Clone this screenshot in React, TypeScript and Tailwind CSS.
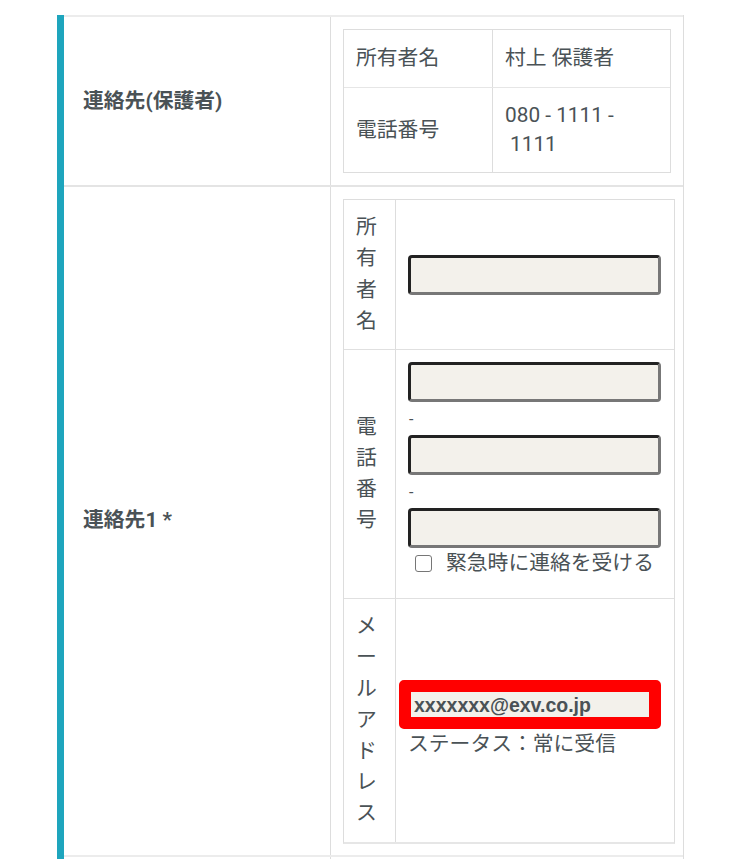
import React from "react";

const txt = "text-[#4a5256]";

function Field() {
  return (
    <input
      readOnly
      className="block h-[40px] w-full rounded-[4px] border-[3px] border-t-[#222] border-l-[#222] border-b-[#777] border-r-[#777] bg-[#f3f1eb] outline-none"
    />
  );
}

function Stack({ chars }: { chars: string }) {
  return (
    <div className="flex flex-col">
      {chars.split("").map((c, i) => (
        <span key={i} className="block leading-[31.2px]">
          {c}
        </span>
      ))}
    </div>
  );
}

export default function App() {
  return (
    <div
      className={`min-h-[900px] bg-white pt-[15px] pl-[57px] ${txt} text-[20.8px] leading-[31.2px]`}
      style={{ fontFamily: 'Roboto, "Noto Sans CJK JP", sans-serif' }}
    >
      <div className="w-[627px] border-l-[7px] border-l-[#1ea5bd] border-r border-r-[#dddddd]">
        {/* Row 1 */}
        <div className="flex border-t-2 border-t-[#ececec]">
          <div className="flex w-[267px] shrink-0 items-center border-r border-r-[#dddddd] pl-[19px] font-bold">
            連絡先(保護者)
          </div>
          <div className="flex-1 p-3">
            <div className="border border-[#dddddd]">
              <div className="flex">
                <div className="w-[149px] shrink-0 border-r border-r-[#dddddd] px-3 py-[13px]">所有者名</div>
                <div className="flex-1 px-3 py-[13px]">村上 保護者</div>
              </div>
              <div className="flex border-t border-t-[#e6e6e6]">
                <div className="flex w-[149px] shrink-0 items-center border-r border-r-[#dddddd] px-3">電話番号</div>
                <div className="flex-1 px-3 py-[13px] leading-[29px]">
                  <div>080 - 1111 -</div>
                  <div className="pl-[5px]">1111</div>
                </div>
              </div>
            </div>
          </div>
        </div>

        {/* Row 2 */}
        <div className="flex border-t-2 border-t-[#e4e4e4]">
          <div className="flex w-[267px] shrink-0 items-center border-r border-r-[#dddddd] pl-[19px] font-bold">
            連絡先1 *
          </div>
          <div className="flex-1 px-3 pt-3 pb-[11px]">
            <div className="border border-b-2 border-[#dddddd] border-b-[#e6e6e6]">
              {/* 所有者名 */}
              <div className="flex">
                <div className="w-[52px] shrink-0 border-r border-r-[#dddddd] py-[12px] pl-[12px]">
                  <Stack chars="所有者名" />
                </div>
                <div className="flex flex-1 items-center pl-3 pr-[13px]">
                  <Field />
                </div>
              </div>
              {/* 電話番号 */}
              <div className="flex border-t border-t-[#e0e0e0]">
                <div className="flex w-[52px] shrink-0 items-center border-r border-r-[#dddddd] pl-[12px]">
                  <Stack chars="電話番号" />
                </div>
                <div className="flex-1 pl-3 pr-[13px] pt-[12px] pb-[19px]">
                  <Field />
                  <div className="h-[33px] pl-[1px] pt-[3px] text-[16px] leading-[30px]">-</div>
                  <Field />
                  <div className="h-[33px] pl-[1px] pt-[3px] text-[16px] leading-[30px]">-</div>
                  <Field />
                  <label className="flex items-center leading-[31.2px]">
                    <span className="ml-[7px] mr-[14px] inline-block h-[17px] w-[17px] rounded-[3px] border-[1.5px] border-[#767676] bg-white" />
                    <span>緊急時に連絡を受ける</span>
                  </label>
                </div>
              </div>
              {/* メールアドレス */}
              <div className="flex border-t border-t-[#e0e0e0]">
                <div className="w-[52px] shrink-0 border-r border-r-[#dddddd] py-[12px] pl-[12px]">
                  <Stack chars="メールアドレス" />
                </div>
                <div className="flex flex-1 flex-col justify-center pl-3 pr-[13px]">
                  <div className="-ml-[9px] w-[262px] rounded-[5px] border-[12px] border-[#ff0000]">
                    <div
                      className="h-[25px] bg-[#f3f1eb] pl-[3px] text-[19.5px] font-bold leading-[26px] text-[#4a5256]"
                      style={{ fontFamily: '"Liberation Sans", Arial, sans-serif' }}
                    >
                      xxxxxxx@exv.co.jp
                    </div>
                  </div>
                  <div className="leading-[31.2px]">ステータス：常に受信</div>
                </div>
              </div>
            </div>
          </div>
        </div>

        {/* Row 3 (continues) */}
        <div className="flex border-t-2 border-t-[#ececec]">
          <div className="h-[60px] w-[267px] shrink-0 border-r border-r-[#dddddd]" />
          <div className="flex-1" />
        </div>
      </div>
    </div>
  );
}
